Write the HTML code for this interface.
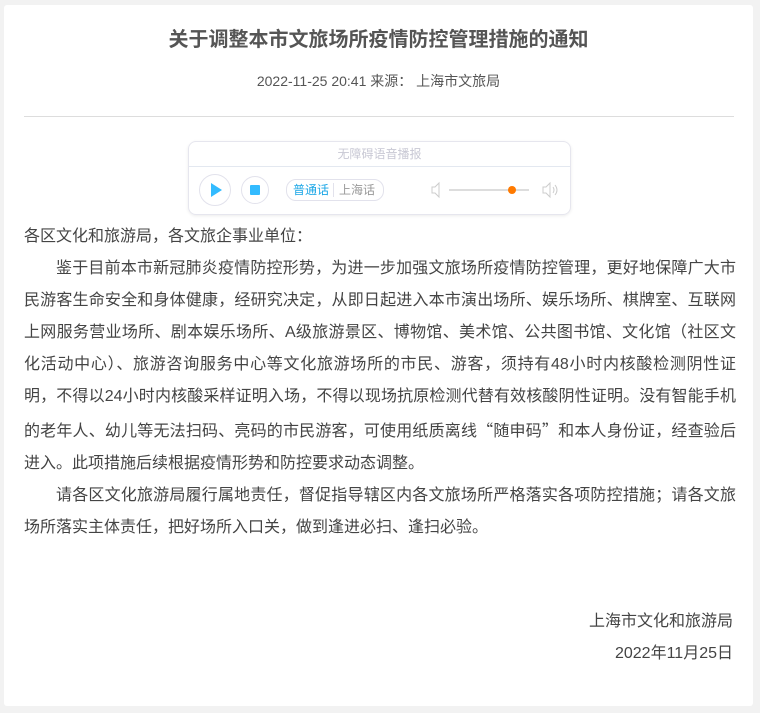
<!DOCTYPE html>
<html><head><meta charset="utf-8"><style>
body{margin:0;background:#f2f2f2;width:760px;height:713px;overflow:hidden;font-family:"Liberation Sans","Noto Sans CJK SC",sans-serif;}
.card{position:absolute;left:4px;top:5px;width:749px;height:701px;background:#fff;border-radius:3px;}
h1{position:absolute;left:0;right:0;top:21px;margin:0;text-align:center;font-size:20px;font-weight:bold;color:#555;line-height:28px;}
.meta{position:absolute;left:0;right:0;top:66px;text-align:center;font-size:14px;color:#555;}
.hr{position:absolute;left:20px;width:710px;top:111px;border-top:1px solid #ddd;}
.player{position:absolute;left:184px;top:136px;width:381px;height:72px;border:1px solid #e6e6ee;border-radius:8px;box-shadow:0 1px 3px rgba(0,0,0,.08);}
.ptitle{height:24px;line-height:24px;text-align:center;font-size:12px;color:#c8c8d4;border-bottom:1px solid #e3e8f0;}
.circ{position:absolute;width:30px;height:30px;border:1px solid #e2e2ec;border-radius:50%;top:32px;}
.lang{position:absolute;left:97px;top:37px;height:20px;width:96px;border:1px solid #e2e2ec;border-radius:10px;font-size:12px;line-height:20px;}
.text{position:absolute;left:20px;top:216px;width:712px;font-size:16px;line-height:32px;color:#444;text-align:justify;}
.text p{margin:0;}
.ind{text-indent:2em;}
.q{font-family:"Noto Sans CJK SC",sans-serif;}
.sign{position:absolute;right:20px;top:601px;text-align:right;font-size:16px;line-height:32px;color:#444;}
</style></head><body>
<div class="card">
<h1>关于调整本市文旅场所疫情防控管理措施的通知</h1>
<div class="meta">2022-11-25 20:41 来源：&nbsp;上海市文旅局</div>
<div class="hr"></div>
<div class="player">
<div class="ptitle">无障碍语音播报</div>
<div class="circ" style="left:10px"><svg width="30" height="30"><polygon points="11,8 22,15 11,22" fill="#33bbff"/></svg></div>
<div class="circ" style="left:52px;width:26px;height:26px;top:34px"><svg width="26" height="26"><rect x="8" y="8" width="10" height="10" fill="#33bbff" rx="1"/></svg></div>
<div class="lang"><span style="color:#1aa6e6;padding-left:6px">普通话</span><span style="border-left:1px solid #e2e2ec;margin-left:4px;padding-left:5px;color:#999">上海话</span></div>
<svg style="position:absolute;left:240px;top:37px" width="140" height="22">
<path d="M3,8 H6 L10,4 V18 L6,14 H3 Z" fill="none" stroke="#ccc" stroke-width="1"/>
<line x1="20" y1="11" x2="100" y2="11" stroke="#ddd" stroke-width="2"/>
<defs><linearGradient id="g"><stop offset="0" stop-color="#ffd84a"/><stop offset="1" stop-color="#ff7a00"/></linearGradient></defs>
<line x1="20" y1="11" x2="83" y2="11" stroke="url(#g)" stroke-width="2"/>
<circle cx="83" cy="11" r="4" fill="#ff7a00"/>
<path d="M114,8 H117 L121,4 V18 L117,14 H114 Z" fill="none" stroke="#ccc" stroke-width="1"/>
<path d="M124,8 Q126,11 124,14 M126,6 Q130,11 126,16" fill="none" stroke="#ccc"/>
</svg>
</div>
<div class="text">
<p>各区文化和旅游局，各文旅企事业单位：</p>
<p class="ind">鉴于目前本市新冠肺炎疫情防控形势，为进一步加强文旅场所疫情防控管理，更好地保障广大市民游客生命安全和身体健康，经研究决定，从即日起进入本市演出场所、娱乐场所、棋牌室、互联网上网服务营业场所、剧本娱乐场所、A级旅游景区、博物馆、美术馆、公共图书馆、文化馆（社区文化活动中心）、旅游咨询服务中心等文化旅游场所的市民、游客，须持有48小时内核酸检测阴性证明，不得以24小时内核酸采样证明入场，不得以现场抗原检测代替有效核酸阴性证明。没有智能手机的老年人、幼儿等无法扫码、亮码的市民游客，可使用纸质离线<span class="q">“</span>随申码<span class="q">”</span>和本人身份证，经查验后进入。此项措施后续根据疫情形势和防控要求动态调整。</p>
<p class="ind">请各区文化旅游局履行属地责任，督促指导辖区内各文旅场所严格落实各项防控措施；请各文旅场所落实主体责任，把好场所入口关，做到逢进必扫、逢扫必验。</p>
</div>
<div class="sign">上海市文化和旅游局<br>2022年11月25日</div>
</div>
</body></html>
